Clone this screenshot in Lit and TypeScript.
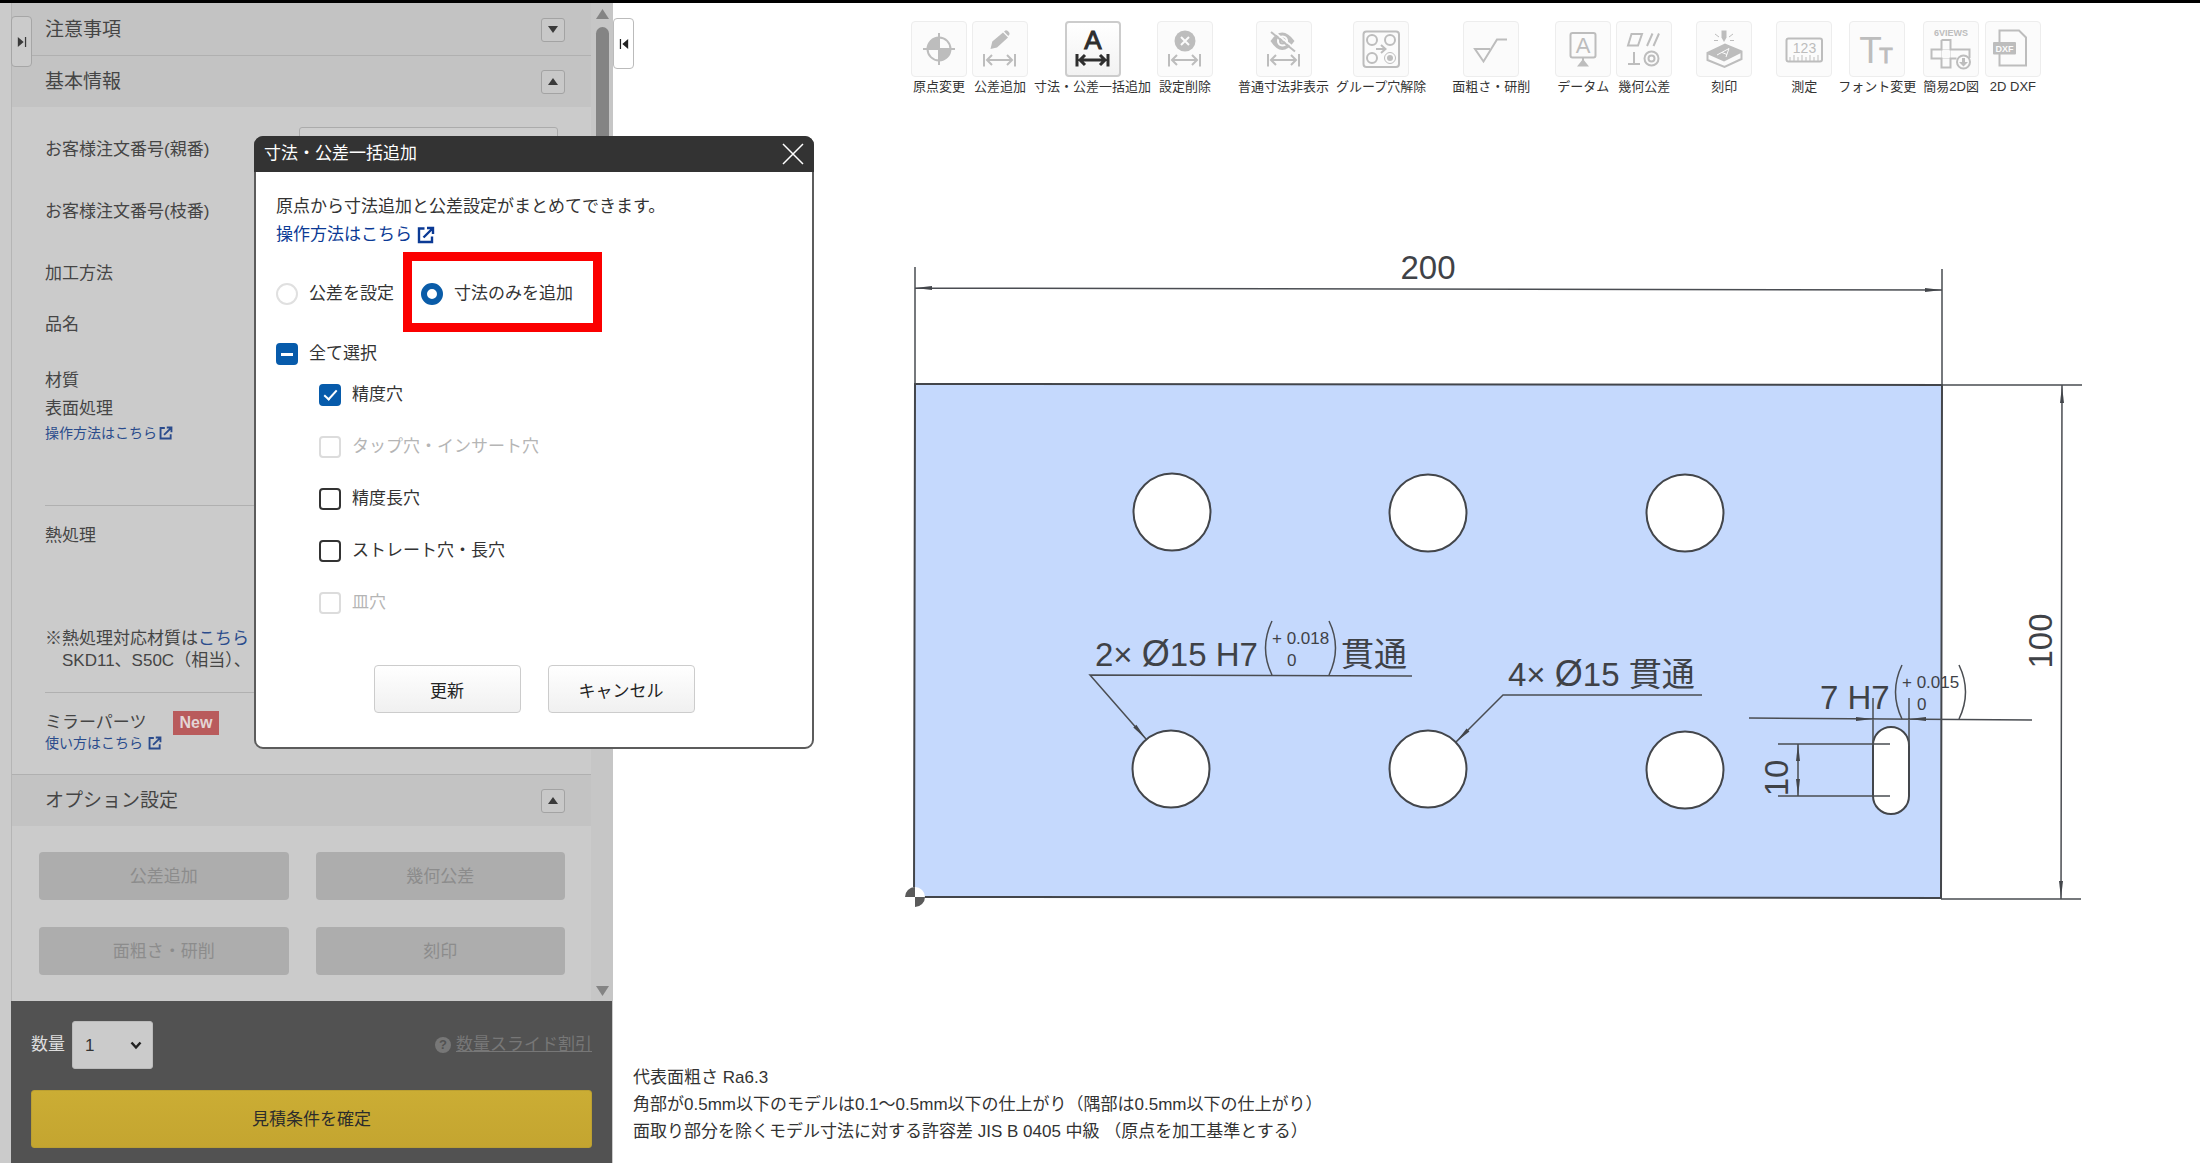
import { LitElement, html, svg, css, nothing, TemplateResult } from "lit";
import { customElement, state } from "lit/decorators.js";
import { classMap } from "lit/directives/class-map.js";

/** Horizontal dimension mark shared by several toolbar icons. */
const dimMark = svg`<path class="s" d="M12 33v12.5M43 33v12.5M15 39h25M20 34l-5 5 5 5M35 34l5 5-5 5"/>`;

const icons: Record<string, TemplateResult> = {
  origin: svg`
    <circle class="s" cx="28" cy="28" r="11.5"/>
    <path class="f" d="M28 28V16.500a11.500 11.500 0 0 0-11.500 11.500zM28 28v11.500a11.500 11.500 0 0 0 11.500-11.500z"/>
    <path class="s" d="M28 12v32M12 28h32"/>`,
  edit: svg`
    <path class="f" d="M18.500 28l1.800-7.500L31 11.500l5 5L25 26.500zM32 10.600l1.500-1.200c1.500-1 5 2.600 3.900 4.200l-1.100 1.400z"/>${dimMark}`,
  batch: svg`<text class="f t" x="28" y="28" font-size="26" text-anchor="middle">A</text>${dimMark}`,
  remove: svg`
    <circle class="f" cx="28" cy="20" r="10.500"/>
    <path class="w" d="M24 16l8 8M32 16l-8 8"/>${dimMark}`,
  hide: svg`
    <path class="f" fill-rule="evenodd" d="M14.500 20q11.500-17 24 0q-12.500 18-24 0zM26.500 14.500a5.500 5.500 0 1 0 .01 0z"/>
    <circle class="s" cx="26.500" cy="20" r="2.500"/>
    <path class="w" d="M16 9l24 19.500"/><path class="s" d="M15 11l24 19.500"/>${dimMark}`,
  group: svg`
    <rect class="s" x="10.500" y="10.500" width="35.500" height="35.500" rx="3"/>
    <circle class="s" cx="19" cy="19" r="5"/><circle class="s" cx="37" cy="19" r="5"/>
    <circle class="s" cx="19" cy="37" r="5"/><circle class="s thin" cx="37" cy="37" r="5.500"/>
    <circle class="f" cx="37" cy="37" r="3"/>
    <path class="s" d="M23 28h9M28 24l4.500 4-4.500 4"/>`,
  rough: svg`<path class="s" d="M27 28H12l8.500 12.500L34 18.500h10"/>`,
  datum: svg`
    <rect class="s" x="15.500" y="12" width="25" height="24.500" rx="2"/>
    <path class="s" d="M28 37v4"/><path class="f" d="M28 38l6 7.500H22z"/>
    <text class="f" x="28" y="32" font-size="22" text-anchor="middle">A</text>`,
  geo: svg`
    <path class="s" d="M15.500 13H26l-4 11.500H12zM31 25l5.500-12.500M37.500 25L43 12.500M12 43h12M18 43V31"/>
    <circle class="s" cx="35.500" cy="37.500" r="7"/><circle class="s" cx="35.500" cy="37.500" r="3"/>`,
  engrave: svg`
    <path class="s" d="M11.500 32L29 23.500l16.500 7v7.500L28.500 46 11.500 39zM11.500 32l16.500 7.500 17.500-9"/>
    <path class="f" d="M12 32L29 23.500 45.500 30.500 28 39.500z"/>
    <path class="w thin" d="M21 34l12-6.500-3 8.500M26 31.500l5 2"/>
    <path class="f" d="M25.500 9.500h5v7L28 21l-2.500-4.500z"/>
    <path class="s thin" d="M19 13l4 3M18 19.500h4M37 13l-4 3M38 19.500h-4"/>`,
  measure: svg`
    <rect class="s" x="10.500" y="17.500" width="35.500" height="23" rx="2"/>
    <text class="f" x="28.500" y="31.500" font-size="14" text-anchor="middle">123</text>
    <path class="s thin" d="M14 40v-4M18 40v-6M22 40v-4M26 40v-6M30 40v-4M34 40v-6M38 40v-4M42 40v-6"/>`,
  font: svg`
    <text class="f" x="21.500" y="41.500" font-size="37" text-anchor="middle">T</text>
    <text class="f t" x="37" y="41.500" font-size="22" text-anchor="middle">T</text>`,
  views: svg`
    <text class="f" x="28" y="14.500" font-size="9" font-weight="700" text-anchor="middle">6VIEWS</text>
    <path class="s" d="M18.500 19h9v9.500h19V37M18.500 19v9.500h-10v9h10v9h9v-9h6"/>
    <path class="s faint" d="M18.500 28.500h9v9h-9z"/>
    <circle class="s" cx="40.500" cy="41" r="6.500"/>
    <path class="f" d="M39 37h3v4h3l-4.500 4.500L36 41h3z"/>`,
  dxf: svg`
    <path class="s" d="M14.500 21V9.500H34l7 7V44.500H14.500V33"/>
    <rect class="f" x="8" y="21" width="23" height="12.500" rx="1"/>
    <text class="wt" x="19.500" y="30.500" font-size="9" font-weight="700" text-anchor="middle">DXF</text>`,
};

interface Tool { icon: string; label: string; enabled?: boolean; }

const toolGroups: Tool[][] = [
  [
    { icon: "origin", label: "原点変更" },
    { icon: "edit", label: "公差追加" },
    { icon: "batch", label: "寸法・公差一括追加", enabled: true },
    { icon: "remove", label: "設定削除" },
  ],
  [
    { icon: "hide", label: "普通寸法非表示" },
    { icon: "group", label: "グループ穴解除" },
  ],
  [{ icon: "rough", label: "面粗さ・研削" }],
  [
    { icon: "datum", label: "データム" },
    { icon: "geo", label: "幾何公差" },
  ],
  [{ icon: "engrave", label: "刻印" }],
  [
    { icon: "measure", label: "測定" },
    { icon: "font", label: "フォント変更" },
    { icon: "views", label: "簡易2D図" },
    { icon: "dxf", label: "2D DXF" },
  ],
];

const base = css`
  :host { box-sizing: border-box; font-family: "Liberation Sans", "Noto Sans CJK JP", sans-serif; }
  *, *::before, *::after { box-sizing: border-box; }
  button, input, select { font-family: inherit; margin: 0; }
  a { text-decoration: none; }
`;

const externalIcon = html`<svg class="ext" viewBox="0 0 18 18" aria-hidden="true">
  <path d="M7.500 2.500H2v13.500h13V10.500M6.500 11.500L15 3M10 2h6v6" fill="none" stroke="currentColor" stroke-width="2.400"/>
</svg>`;

@customElement("tool-bar")
class ToolBar extends LitElement {
  static styles = [base, css`
    :host { display: flex; gap: 24px; padding: 18px 20px 0 298px; }
    .group { display: flex; gap: 5px; }
    .tool {
      display: flex; flex-direction: column; align-items: center; padding: 0; border: 0;
      background: none; color: #333; font-size: 13px; line-height: 20px; white-space: nowrap;
    }
    .tile {
      width: 56px; height: 56px; border: 1px solid #ededed; border-radius: 4px;
      background: #fbfbfb; color: #bdbdbd;
    }
    .on .tile { border: 2px solid #ccc; background: linear-gradient(#fff, #f2f2f2); color: #2e2e2e; }
    .label { padding: 0 1px; }
    svg { display: block; width: 56px; height: 56px; margin: -1px; }
    .on svg { margin: -2px; }
    .s { fill: none; stroke: currentColor; stroke-width: 2; }
    .on .s { stroke-width: 3; }
    .f { fill: currentColor; }
    .t { stroke: currentColor; stroke-width: 1; }
    .w { fill: none; stroke: #fbfbfb; stroke-width: 2; }
    .wt { fill: #fbfbfb; }
    .thin { stroke-width: 1; }
    .faint { stroke-width: 1; opacity: 0.4; }
  `];

  render() {
    return toolGroups.map((group) => html`<div class="group">
      ${group.map((t) => html`
        <button type="button" class=${classMap({ tool: true, on: !!t.enabled })} ?disabled=${!t.enabled}>
          <span class="tile"><svg viewBox="0 0 56 56" aria-hidden="true">${icons[t.icon]}</svg></span>
          <span class="label">${t.label}</span>
        </button>`)}
    </div>`);
  }
}

@customElement("plate-drawing")
class PlateDrawing extends LitElement {
  static styles = [base, css`
    :host { display: block; }
    svg { display: block; width: 100%; height: auto; }
    .plate { fill: #c5d9fd; stroke: #43464b; stroke-width: 2; }
    .hole { fill: #fff; stroke: #43464b; stroke-width: 2; }
    .line { fill: none; stroke: #4a4d52; stroke-width: 1.500; }
    .solid { fill: #43464b; }
    .origin { fill: #5a5a5a; }
    .white { fill: #fff; }
    text { fill: #3f4247; font-size: 33px; }
    .dia { font-size: 36px; }
    .small { font-size: 17px; }
  `];

  private arrow(x: number, y: number, angle: number, length = 17) {
    return svg`<path class="solid" d="M0 0L${-length} -2V2Z" transform="translate(${x} ${y}) rotate(${angle})"/>`;
  }

  private tolerance(x: number, y: number, upper: string) {
    return svg`
      <path class="line" d="M${x} ${y}q-13 27 0 54M${x + 57} ${y}q13 27 0 54"/>
      <text class="small" x=${x} y=${y + 23}>+ ${upper}</text>
      <text class="small" x=${x + 15} y=${y + 45}>0</text>`;
  }

  render() {
    const holes = [[1172, 512], [1428, 513], [1685, 513], [1171, 769], [1428, 769], [1685, 770]];
    return html`<svg viewBox="613 120 1587 900" role="img" aria-label="200 × 100">
      <path class="plate" d="M915 384L1942 385L1941 898L914 897Z"/>
      ${holes.map(([x, y]) => svg`<circle class="hole" cx=${x} cy=${y} r="38.5"/>`)}
      <rect class="hole" x="1873" y="727" width="36" height="87" rx="18"/>

      <path class="line" d="M915 267V384M1942 269V385M915 288L1942 290"/>
      ${this.arrow(915, 288, 180)}${this.arrow(1942, 290, 0)}
      <text x="1428" y="279" text-anchor="middle">200</text>

      <path class="line" d="M1942 385H2082M1941 899H2081M2062 385L2061 899"/>
      ${this.arrow(2062, 386, -90)}${this.arrow(2061, 898, 90)}
      <text transform="translate(2052 641) rotate(-90)" text-anchor="middle">100</text>

      <text x="1095" y="666">2× <tspan class="dia">Ø</tspan>15 H7</text>
      ${this.tolerance(1272, 621, "0.018")}
      <text x="1341" y="666">貫通</text>
      <path class="line" d="M1412 676L1090 675L1146 739"/>
      ${this.arrow(1146, 739, 49)}

      <text x="1508" y="686">4× <tspan class="dia">Ø</tspan>15 貫通</text>
      <path class="line" d="M1702 695H1503L1456 742"/>
      ${this.arrow(1456, 742, 135)}

      <text x="1820" y="709">7 H7</text>
      ${this.tolerance(1902, 665, "0.015")}
      <path class="line" d="M1749 718L2032 720M1873 698V746M1909 698V746"/>
      ${this.arrow(1873, 719, 0)}${this.arrow(1909, 719, 180)}

      <path class="line" d="M1778 744H1890M1778 796H1890M1798 744V796"/>
      ${this.arrow(1798, 744, -90)}${this.arrow(1798, 796, 90)}
      <text transform="translate(1788 778) rotate(-90)" text-anchor="middle">10</text>

      <circle class="white" cx="915" cy="897" r="10"/>
      <path class="origin" d="M915 897V887a10 10 0 0 0-10 10zM915 897V907a10 10 0 0 0 10-10z"/>
    </svg>`;
  }
}

@customElement("side-panel")
class SidePanel extends LitElement {
  static styles = [base, css`
    :host {
      display: flex; flex-direction: column; position: relative; padding-left: 11px;
      background: #cbcbcb; color: #454545; font-size: 17px; line-height: 24px;
    }
    .scroll { flex: 1; display: flex; border-left: 1px solid #b5b5b5; }
    .content { flex: 1; }
    .bar { width: 22px; display: flex; flex-direction: column; align-items: center; padding: 6px 0 5px; background: #c6c6c6; }
    .bar svg { width: 13px; height: 10px; fill: #848484; }
    .thumb { width: 13px; height: 560px; margin: 8px 0 auto; border-radius: 7px; background: #848484; }
    .head {
      display: flex; align-items: center; justify-content: space-between; height: 52px;
      padding: 0 26px 0 33px; border-top: 1px solid #b0b0b0; background: #c3c3c3;
    }
    .head.first { border-top-color: #c3c3c3; }
    h2 { margin: 0; font-size: 19px; font-weight: 400; }
    .toggle {
      display: grid; place-items: center; width: 24px; height: 24px; padding: 0;
      border: 1px solid #a3a3a3; border-radius: 3px; background: #c8c8c8;
    }
    .toggle svg { width: 10px; height: 7px; fill: #3a3a3a; }
    .basic { padding: 12px 33px 0; }
    .row { display: grid; grid-template-columns: 254px 1fr; align-items: center; height: 62px; }
    .row.short { height: 40px; }
    .field { width: 100%; height: 46px; padding: 0 10px; border: 1px solid #ababab; border-radius: 3px; background: #cecece; }
    .block { padding: 18px 0 20px; border-bottom: 1px solid #b0b0b0; }
    .block.material { padding: 22px 0 62px; line-height: 28px; }
    .block.mirror { padding-bottom: 23px; border: 0; }
    .link { display: flex; align-items: center; gap: 2px; width: max-content; font-size: 14px; line-height: 20px; color: #2a4b8c; }
    .ext { width: 14px; height: 14px; }
    .mirror .link { line-height: 16px; gap: 5px; }
    .remark { margin: 80px 0 0; line-height: 22px; }
    .remark a { color: #2a4b8c; }
    .remark span { display: block; padding-left: 17px; }
    .title { display: flex; align-items: center; gap: 26px; height: 24px; }
    .new { padding: 0 7px; background: #b95b5c; color: #e3d5d5; font-size: 16px; font-weight: 700; }
    .options { display: grid; grid-template-columns: 1fr 1fr; gap: 27px; padding: 26px 26px 26px 27px; }
    .option {
      height: 48px; padding: 0 0 3px; border: 0; border-radius: 4px;
      background: #adadad; color: #8c8c8c; font-size: 17px;
    }
    .foot { margin-right: 1px; padding: 20px 20px 15px; background: #525252; }
    .quantity { display: flex; align-items: center; gap: 7px; margin-bottom: 21px; color: #ddd; }
    .select { display: grid; width: 81px; }
    .select > * { grid-area: 1 / 1; }
    select {
      appearance: none; height: 48px; padding: 0 12px; border: 1px solid #bbb; border-radius: 3px;
      background: #cbcbcb; color: #333; font-size: 17px;
    }
    .select svg { place-self: center end; width: 12px; height: 9px; margin-right: 11px; pointer-events: none; }
    .help { display: flex; align-items: center; gap: 5px; margin-left: auto; color: #777; }
    .help span { text-decoration: underline; }
    .help i {
      display: grid; place-items: center; width: 16px; height: 16px; border-radius: 50%;
      background: #777; color: #525252; font-size: 13px; font-weight: 700; font-style: normal; line-height: 16px;
    }
    .confirm {
      width: 100%; height: 58px; padding: 0 0 3px; border: 1px solid #bb9f31; border-radius: 3px;
      background: linear-gradient(#cbad34, #c4a530); color: #2c2c2c; font-size: 17px;
    }
    .handle {
      position: absolute; left: 11px; top: 13px; width: 21px; height: 51px; padding: 0;
      display: grid; place-items: center; border: 1px solid #a6a6a6; border-radius: 4px; background: #cbcbcb;
    }
    .handle svg { width: 10px; height: 10px; fill: #3a3a3a; }
  `];

  private toggle(open: boolean, label: string) {
    return html`<button type="button" class="toggle" aria-label=${label}>
      <svg viewBox="0 0 10 7"><path d=${open ? "M0 7L5 0L10 7Z" : "M0 0H10L5 7Z"}/></svg>
    </button>`;
  }

  render() {
    return html`
      <div class="scroll">
        <div class="content">
          <div class="head first"><h2>注意事項</h2>${this.toggle(false, "注意事項")}</div>
          <div class="head"><h2>基本情報</h2>${this.toggle(true, "基本情報")}</div>
          <div class="basic">
            <div class="row"><label for="parent">お客様注文番号(親番)</label><input class="field" id="parent" type="text"></div>
            <div class="row"><label for="branch">お客様注文番号(枝番)</label><input class="field" id="branch" type="text"></div>
            <div class="row">加工方法</div>
            <div class="row short">品名</div>
            <div class="block material">
              <div>材質</div>
              <div>表面処理</div>
              <a class="link" href="#surface">操作方法はこちら${externalIcon}</a>
            </div>
            <div class="block">
              <div>熱処理</div>
              <p class="remark">※熱処理対応材質は<a href="#heat">こちら</a><span>SKD11、S50C（相当）、</span></p>
            </div>
            <div class="block mirror">
              <div class="title">ミラーパーツ<span class="new">New</span></div>
              <a class="link" href="#mirror">使い方はこちら${externalIcon}</a>
            </div>
          </div>
          <div class="head"><h2>オプション設定</h2>${this.toggle(true, "オプション設定")}</div>
          <div class="options">
            ${["公差追加", "幾何公差", "面粗さ・研削", "刻印"].map(
              (name) => html`<button type="button" class="option" disabled>${name}</button>`)}
          </div>
        </div>
        <div class="bar" aria-hidden="true">
          <svg viewBox="0 0 13 10"><path d="M6.500 0L13 10H0Z"/></svg>
          <div class="thumb"></div>
          <svg viewBox="0 0 13 10"><path d="M0 0H13L6.500 10Z"/></svg>
        </div>
      </div>
      <div class="foot">
        <div class="quantity">
          <label for="qty">数量</label>
          <div class="select">
            <select id="qty"><option>1</option></select>
            <svg viewBox="0 0 12 9" aria-hidden="true"><path d="M1.500 1.500L6 6.500L10.500 1.500" fill="none" stroke="#222" stroke-width="2.500"/></svg>
          </div>
          <a class="help" href="#discount"><i>?</i><span>数量スライド割引</span></a>
        </div>
        <button type="button" class="confirm">見積条件を確定</button>
      </div>
      <button type="button" class="handle" aria-label="パネル">
        <svg viewBox="0 0 10 12"><path d="M0 0L7 6L0 12ZM8.500 0H10V12H8.500Z"/></svg>
      </button>`;
  }
}

@customElement("dimension-dialog")
class DimensionDialog extends LitElement {
  static styles = [base, css`
    :host {
      display: block; width: 560px; border: 2px solid #5c5c5c; border-radius: 9px;
      background: #fff; color: #333; font-size: 17px; line-height: 28px;
    }
    header {
      display: flex; align-items: center; justify-content: space-between; height: 36px; margin: -2px -2px 0;
      padding: 0 10px; border-radius: 9px 9px 0 0; background: #333; color: #fff;
    }
    h1 { margin: 0; font-size: 17px; font-weight: 400; }
    .close { width: 22px; height: 22px; padding: 0; border: 0; background: none; }
    .close svg { display: block; width: 22px; height: 22px; }
    .body { padding: 21px 20px 34px; }
    p { margin: 0; }
    .link { display: flex; align-items: center; gap: 5px; width: max-content; color: #0b3a95; }
    .ext { width: 18px; height: 18px; }
    .modes { display: flex; gap: 9px; height: 80px; margin-top: 3px; }
    label { display: flex; align-items: center; gap: 11px; }
    .modes label { padding-top: 3px; }
    .modes .marked { padding: 3px 20px 0 9px; border: 9px solid #fb0000; }
    .all { height: 24px; margin-top: 10px; }
    ul { margin: 3px 0 36px; padding: 0 0 0 43px; list-style: none; }
    li label { height: 52px; width: max-content; }
    .off { color: #b5b5b5; }
    input {
      appearance: none; display: grid; place-items: center; flex: none; width: 22px; height: 22px;
      border: 2px solid #333; background: #fff;
    }
    input[type="checkbox"] { border-radius: 4px; }
    input[type="radio"] { border-color: #e0e0e0; border-radius: 50%; }
    input[type="radio"]:checked { border: 6px solid #0a5ca8; }
    input:disabled { border-color: #dcdcdc; }
    input[type="checkbox"]:checked, input:indeterminate[type="checkbox"] { border-color: #075bab; background: #075bab; }
    input[type="checkbox"]:checked::before {
      content: ""; width: 7px; height: 13px; margin-top: -3px; border: solid #fff; border-width: 0 2px 2px 0; transform: rotate(42deg);
    }
    input[type="checkbox"]:indeterminate::before { content: ""; width: 12px; height: 3px; background: #fff; }
    footer { display: flex; justify-content: center; gap: 27px; }
    .action {
      width: 147px; height: 48px; border: 1px solid #ccc; border-radius: 4px;
      background: linear-gradient(#fff, #f0f0f0); color: #222; font-size: 17px;
    }
  `];

  @state() private mode = "only";

  private targets = [
    { name: "精度穴", checked: true },
    { name: "タップ穴・インサート穴", off: true },
    { name: "精度長穴" },
    { name: "ストレート穴・長穴" },
    { name: "皿穴", off: true },
  ] as { name: string; checked?: boolean; off?: boolean }[];

  render() {
    return html`
      <header>
        <h1>寸法・公差一括追加</h1>
        <button type="button" class="close" aria-label="閉じる">
          <svg viewBox="0 0 22 22"><path d="M1 1L21 21M21 1L1 21" stroke="#fff" stroke-width="1.500"/></svg>
        </button>
      </header>
      <div class="body">
        <p>原点から寸法追加と公差設定がまとめてできます。</p>
        <a class="link" href="#guide">操作方法はこちら${externalIcon}</a>
        <div class="modes">
          <label><input type="radio" name="mode" .checked=${this.mode === "tolerance"} @change=${() => (this.mode = "tolerance")}>公差を設定</label>
          <label class="marked"><input type="radio" name="mode" .checked=${this.mode === "only"} @change=${() => (this.mode = "only")}>寸法のみを追加</label>
        </div>
        <label class="all"><input type="checkbox" .indeterminate=${true}>全て選択</label>
        <ul>
          ${this.targets.map((t) => html`<li>
            <label class=${t.off ? "off" : nothing}><input type="checkbox" ?checked=${t.checked} ?disabled=${t.off}>${t.name}</label>
          </li>`)}
        </ul>
        <footer>
          <button type="button" class="action">更新</button>
          <button type="button" class="action">キャンセル</button>
        </footer>
      </div>`;
  }
}

@customElement("app-root")
class AppRoot extends LitElement {
  static styles = [base, css`
    :host {
      display: grid; grid-template-columns: 613px 1fr; position: relative; min-height: 100vh;
      border-top: 3px solid #000; background: #fff; color: #333;
    }
    main { display: flex; flex-direction: column; position: relative; min-width: 0; }
    plate-drawing { margin-top: 23px; }
    .notes { margin: auto 20px 18px; font-size: 17px; line-height: 27px; }
    .notes p { margin: 0; }
    .handle {
      position: absolute; left: 0; top: 15px; width: 21px; height: 51px; padding: 0;
      display: grid; place-items: center; border: 1px solid #bbb; border-radius: 4px; background: #fff;
    }
    .handle svg { width: 10px; height: 10px; fill: #222; }
    dimension-dialog { position: absolute; left: 254px; top: 133px; }
  `];

  render() {
    return html`
      <side-panel></side-panel>
      <main>
        <tool-bar></tool-bar>
        <plate-drawing></plate-drawing>
        <div class="notes">
          <p>代表面粗さ Ra6.3</p>
          <p>角部が0.5mm以下のモデルは0.1～0.5mm以下の仕上がり（隅部は0.5mm以下の仕上がり）</p>
          <p>面取り部分を除くモデル寸法に対する許容差 JIS B 0405 中級 （原点を加工基準とする）</p>
        </div>
        <button type="button" class="handle" aria-label="パネルを閉じる">
          <svg viewBox="0 0 10 12"><path d="M10 0L3 6L10 12ZM0 0H1.500V12H0Z"/></svg>
        </button>
      </main>
      <dimension-dialog role="dialog" aria-label="寸法・公差一括追加"></dimension-dialog>`;
  }
}
